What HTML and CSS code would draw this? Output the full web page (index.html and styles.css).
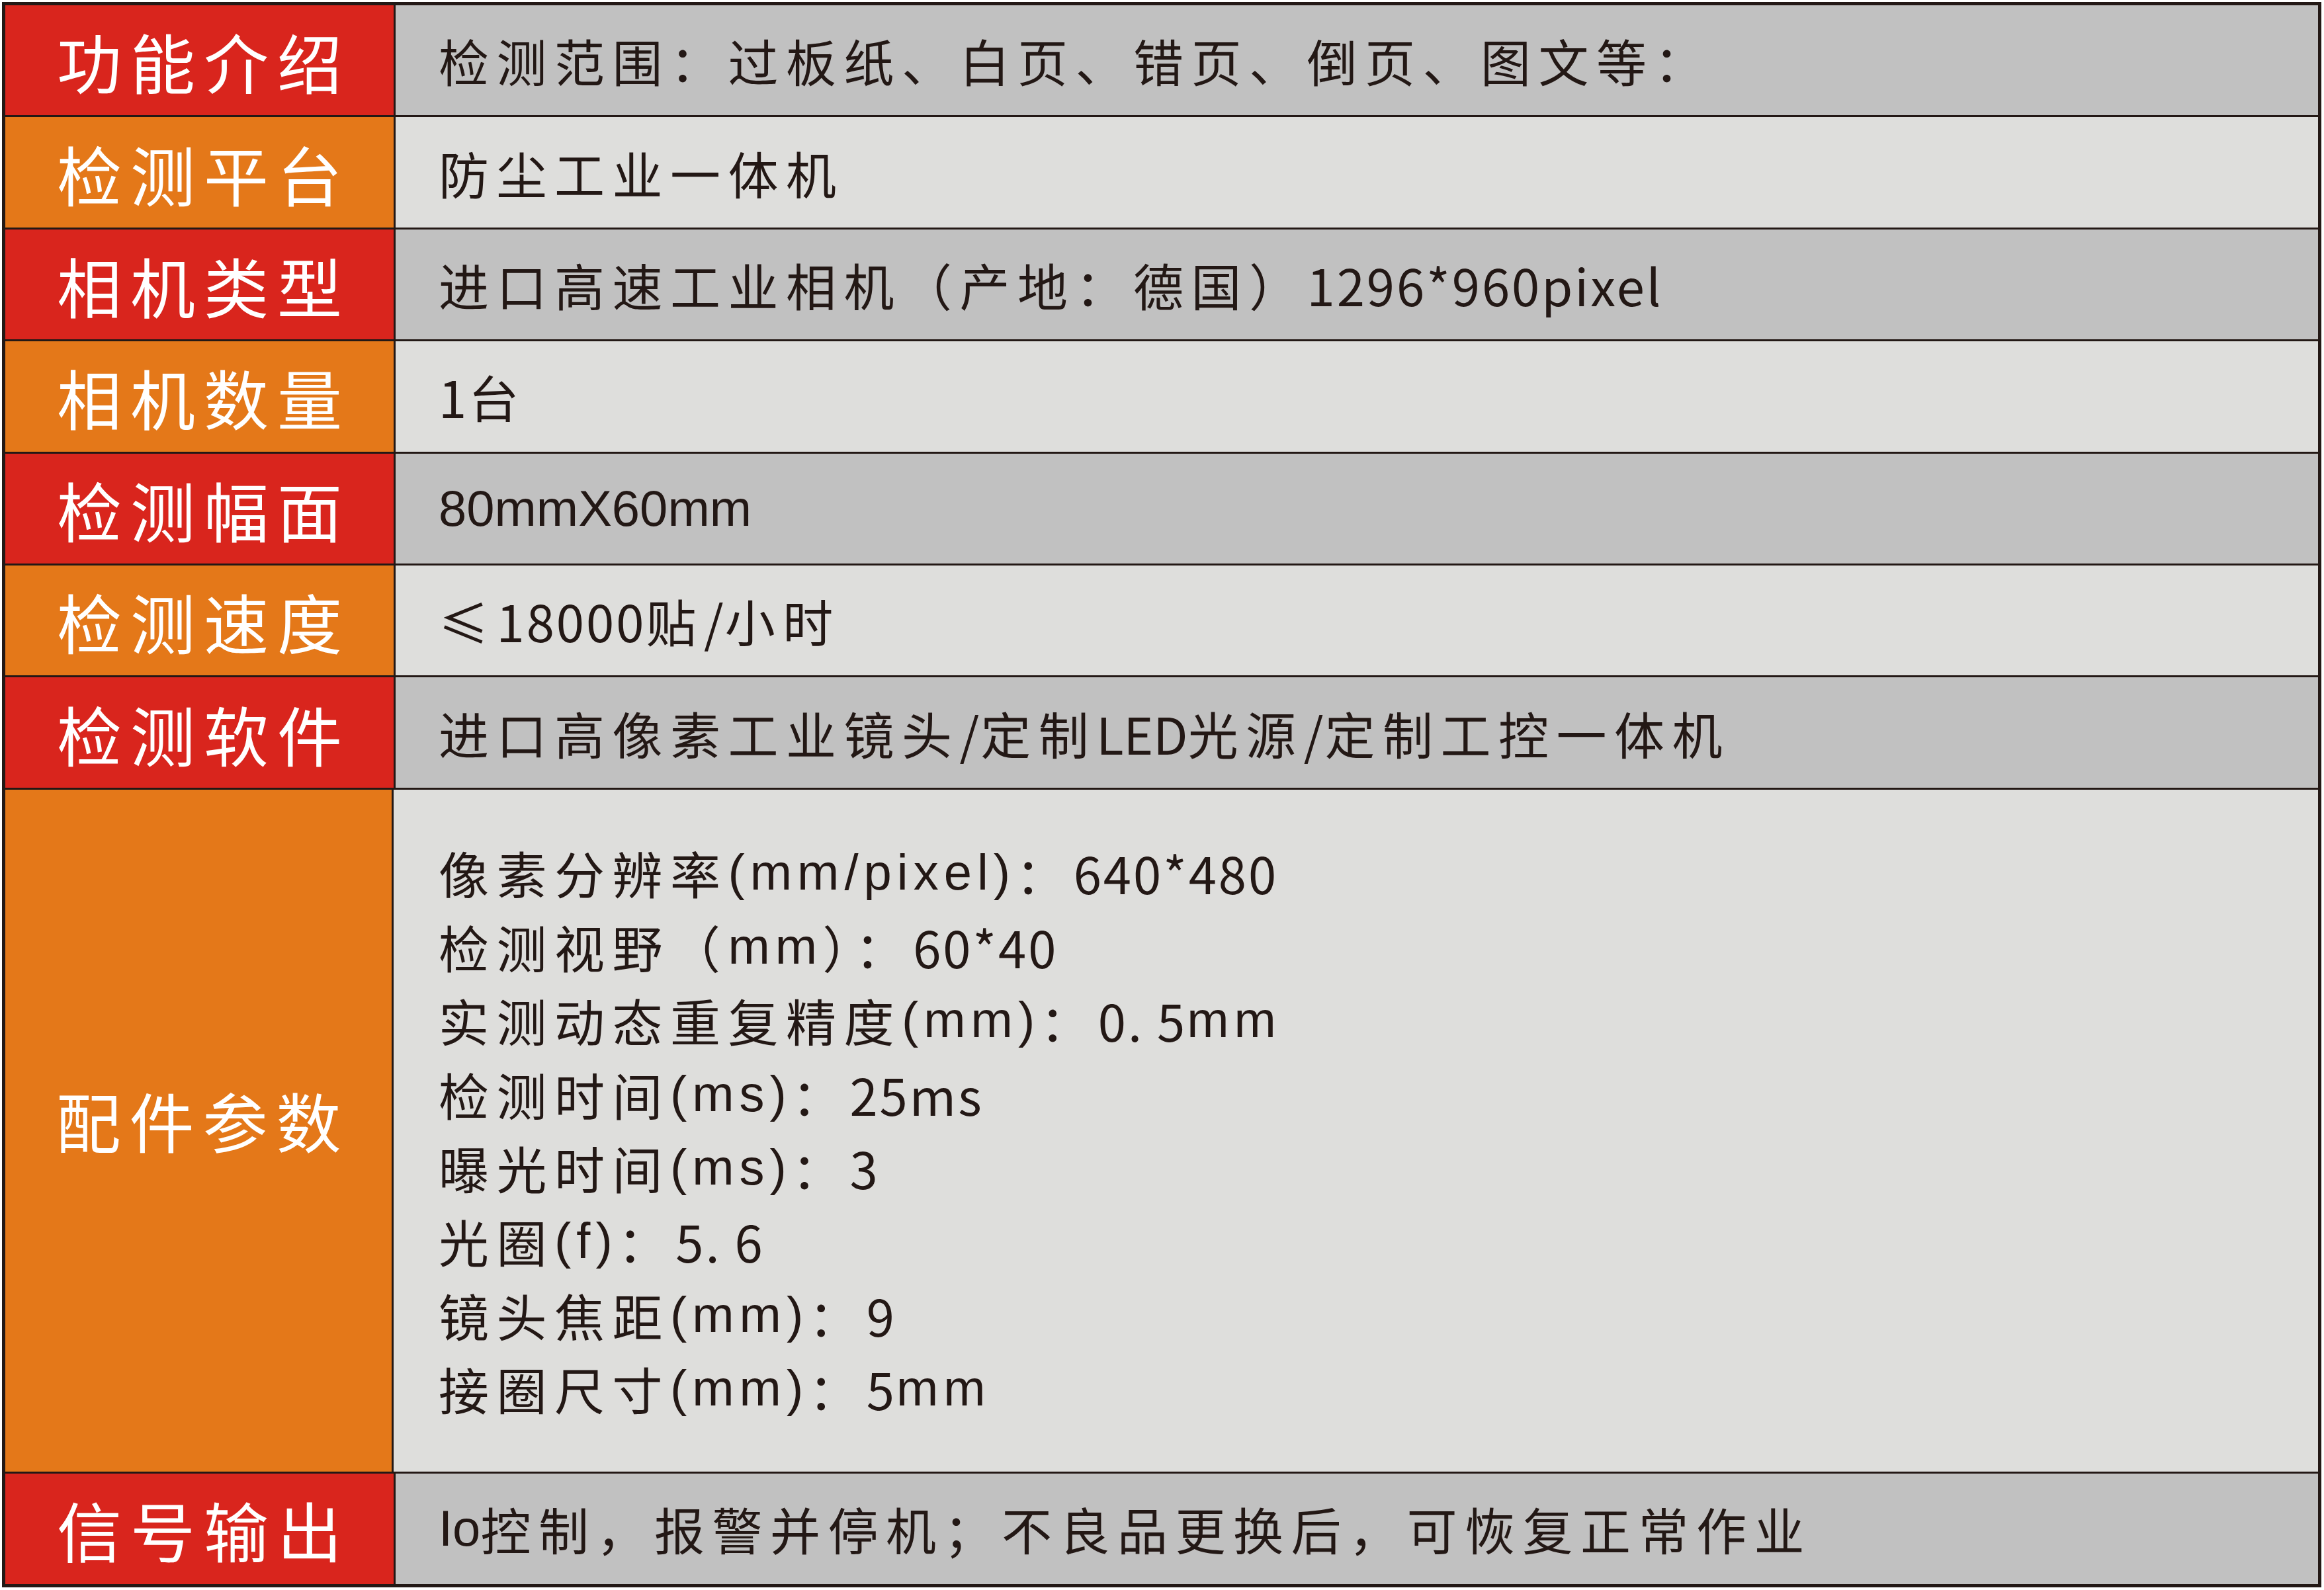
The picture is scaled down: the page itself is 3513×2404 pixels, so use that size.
FILE: index.html
```html
<!DOCTYPE html>
<html lang="zh-CN">
<head>
<meta charset="utf-8">
<title>配置参数</title>
<link rel="stylesheet" href="styles.css">
</head>
<body>
<div class="spec">
  <div class="row odd">
    <div class="label red">功能介绍</div>
    <div class="value">检测范围：过板纸、白页、错页、倒页、图文等：</div>
  </div>
  <div class="row even">
    <div class="label orange">检测平台</div>
    <div class="value">防尘工业一体机</div>
  </div>
  <div class="row odd">
    <div class="label red">相机类型</div>
    <div class="value">进口高速工业相机（产地：德国）<span class="lat">1296*960pixel</span></div>
  </div>
  <div class="row even">
    <div class="label orange">相机数量</div>
    <div class="value"><span class="lat">1</span>台</div>
  </div>
  <div class="row odd">
    <div class="label red">检测幅面</div>
    <div class="value"><span class="cond">80mmX60mm</span></div>
  </div>
  <div class="row even">
    <div class="label orange">检测速度</div>
    <div class="value">≤<span class="lat">18000</span>贴<span class="sep">/</span>小时</div>
  </div>
  <div class="row odd">
    <div class="label red">检测软件</div>
    <div class="value">进口高像素工业镜头<span class="sep">/</span>定制<span class="tight">LED</span>光源<span class="sep">/</span>定制工控一体机</div>
  </div>
  <div class="row even tall">
    <div class="label orange">配件参数</div>
    <div class="value list">
      <div class="line">像素分辨率<span class="narrow">(mm/pixel)</span>：<span class="lat">640*480</span></div>
      <div class="line">检测视野（<span class="narrow">mm</span>）：<span class="lat">60*40</span></div>
      <div class="line">实测动态重复精度<span class="narrow">(mm)</span>：<span class="lat">0. 5</span><span class="narrow">mm</span></div>
      <div class="line">检测时间<span class="narrow">(ms)</span>：<span class="lat">25ms</span></div>
      <div class="line">曝光时间<span class="narrow">(ms)</span>：<span class="lat">3</span></div>
      <div class="line">光圈<span class="narrow">(f)</span>：<span class="lat">5. 6</span></div>
      <div class="line">镜头焦距<span class="narrow">(mm)</span>：<span class="lat">9</span></div>
      <div class="line">接圈尺寸<span class="narrow">(mm)</span>：<span class="lat">5</span><span class="narrow">mm</span></div>
    </div>
  </div>
  <div class="row odd last">
    <div class="label red">信号输出</div>
    <div class="value"><span class="io">Io</span>控制，报警并停机；不良品更换后，可恢复正常作业</div>
  </div>
</div>
</body>
</html>
```

FILE: styles.css
```css
html, body {
  margin: 0;
  padding: 0;
  background: #ffffff;
}

body {
  padding: 3px 0 0 3px;
}

.spec {
  width: 3506px;
  box-sizing: border-box;
  border: 5px solid #231815;
  display: flex;
  flex-direction: column;
  font-family: "Noto Sans CJK SC", "Noto Sans", sans-serif;
}

.row {
  display: flex;
  height: 166.4px;
  border-bottom: 3px solid #231815;
}

.row.tall {
  height: 1031px;
}

.row.last {
  height: 167px;
  border-bottom: none;
}

.label {
  width: 587px;
  flex: none;
  border-right: 3px solid #231815;
  display: flex;
  align-items: center;
  justify-content: center;
  color: #ffffff;
  font-size: 98px;
  font-weight: 400;
  letter-spacing: 13px;
  text-indent: 13px;
  line-height: 1;
}

.tall .label {
  padding-bottom: 34px;
  box-sizing: border-box;
}

.red { background: #d9251d; }
.orange { background: #e47819; }

.value {
  flex: 1;
  display: flex;
  align-items: center;
  padding-left: 65px;
  color: #231815;
  font-size: 76px;
  letter-spacing: 11.5px;
  line-height: 1;
  white-space: pre;
}

.odd .value { background: #c1c1c1; }
.even .value { background: #dededc; }

.value.list {
  flex-direction: column;
  align-items: flex-start;
  justify-content: center;
  padding-left: 68px;
}

.line {
  height: 111.4px;
  display: flex;
  align-items: center;
}

.lat {
  letter-spacing: 3px;
}

.tight {
  letter-spacing: 0;
}

.sep {
  letter-spacing: 2px;
}

.cond {
  font-family: "Liberation Sans", sans-serif;
  letter-spacing: 0;
}

.narrow {
  font-family: "Liberation Sans", sans-serif;
  letter-spacing: 8px;
}

.io {
  font-family: "Liberation Sans", sans-serif;
  letter-spacing: 0;
}
```
